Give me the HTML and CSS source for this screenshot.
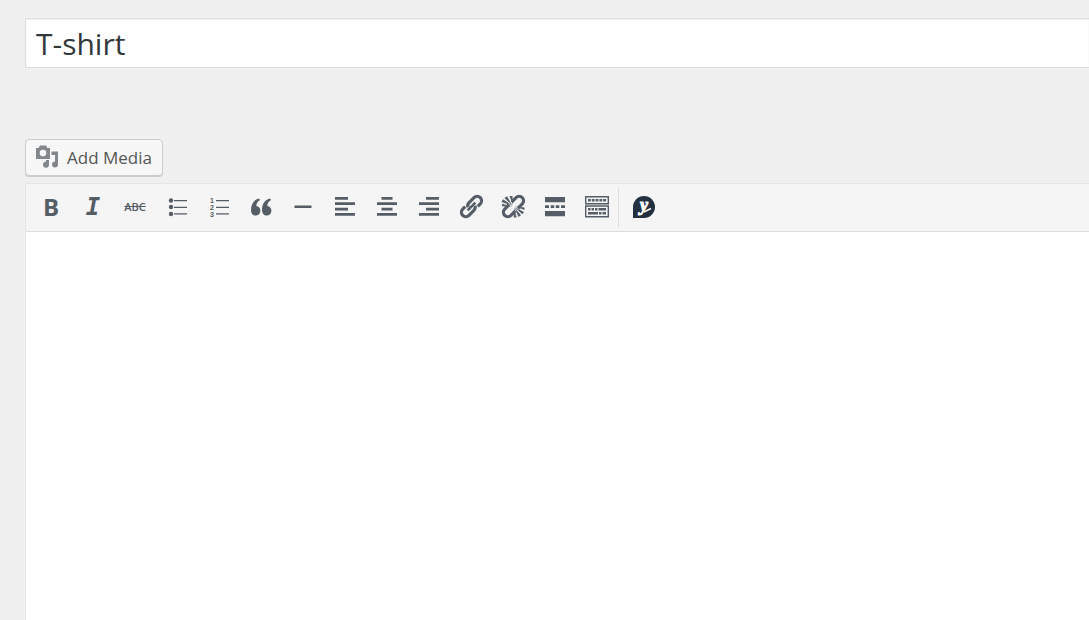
FILE: index.html
```html
<!DOCTYPE html>
<html lang="en">
<head>
    <meta charset="UTF-8">
    <meta name="viewport" content="width=device-width, initial-scale=1.0">
    <title>Edit Product</title>
    <link rel="stylesheet" href="styles.css">
</head>
<body>
<main class="post-body">
    <input class="title" type="text" value="T-shirt" aria-label="Product name">

    <button class="add-media" type="button">
        <svg width="24" height="24" viewBox="0 0 24 24" aria-hidden="true">
            <path fill-rule="evenodd" d="M0 3h2.500L4 .500h6L11.500 3H14v11H0zM7 4.800a3.300 3.300 0 1 0 0 6.600a3.300 3.300 0 1 0 0-6.600z"/>
            <path d="M15.500 6.500H22v13a3 3 0 1 1-3-3V10h-3.500z"/>
            <path d="M10 15h3v4.500a3 3 0 1 1-3-2.800z"/>
        </svg>
        Add Media
    </button>

    <section class="editor">
        <div class="toolbar" role="toolbar" aria-label="Formatting">
            <button type="button" class="tool bold" title="Bold">B</button>
            <button type="button" class="tool italic" title="Italic">I</button>
            <button type="button" class="tool strike" title="Strikethrough">ABC</button>
            <button type="button" class="tool" title="Bulleted list">
                <svg viewBox="0 0 26 26">
                    <circle cx="7" cy="6.500" r="2.200"/><circle cx="7" cy="13" r="2.200"/><circle cx="7" cy="20" r="2.200"/>
                    <path d="M10 6h13v1.300H10zM10 12.700h13V14H10zM10 19.300h13v1.300H10z"/>
                </svg>
            </button>
            <button type="button" class="tool" title="Numbered list">
                <svg viewBox="0 0 26 26">
                    <text class="digit" x="4" y="9">1</text>
                    <text class="digit" x="4" y="16">2</text>
                    <text class="digit" x="4" y="23">3</text>
                    <path d="M10 6h13v1.300H10zM10 12.700h13V14H10zM10 19.300h13v1.300H10z"/>
                </svg>
            </button>
            <button type="button" class="tool" title="Blockquote">
                <svg viewBox="0 0 26 26">
                    <path d="M11 4.500C6 5.500 3 10 3 16c0 3.500 2 5.500 4.700 5.500s4.700-2 4.700-4.800c0-2.500-1.800-4.400-4.100-4.600C8.300 9.500 9.500 7.300 12 6z"/>
                    <path d="M22 4.500c-5 1-8 5.500-8 11.500 0 3.500 2 5.500 4.700 5.500s4.700-2 4.700-4.800c0-2.500-1.800-4.400-4.100-4.600 0-2.600 1.200-4.800 3.700-6.100z"/>
                </svg>
            </button>
            <button type="button" class="tool" title="Horizontal line">
                <svg viewBox="0 0 26 26"><path d="M4.500 11.500h17V14h-17z"/></svg>
            </button>
            <button type="button" class="tool" title="Align left">
                <svg viewBox="0 0 26 26"><path d="M3 3h13v2.700H3zM3 8.300h20V11H3zM3 13.700h13v2.700H3zM3 19h20v2.700H3z"/></svg>
            </button>
            <button type="button" class="tool" title="Align center">
                <svg viewBox="0 0 26 26"><path d="M7.500 3h11v2.700h-11zM3 8.300h20V11H3zM7.500 13.700h11v2.700h-11zM3 19h20v2.700H3z"/></svg>
            </button>
            <button type="button" class="tool" title="Align right">
                <svg viewBox="0 0 26 26"><path d="M10 3h13v2.700H10zM3 8.300h20V11H3zM10 13.700h13v2.700H10zM3 19h20v2.700H3z"/></svg>
            </button>
            <button type="button" class="tool" title="Insert link">
                <svg viewBox="0 0 26 26">
                    <g class="chain" transform="rotate(-45 13.500 12.500)">
                        <path d="M10.500 10.500c.8-1.500 2-2.400 4-2.400h7a4.400 4.400 0 0 1 0 8.800H18"/>
                        <path d="M16.500 14.500c-.8 1.500-2 2.400-4 2.400h-7a4.400 4.400 0 0 1 0-8.800H9"/>
                        <path class="link-bar" d="M8 12.500h11"/>
                    </g>
                </svg>
            </button>
            <button type="button" class="tool" title="Remove link">
                <svg viewBox="0 0 26 26">
                    <g class="chain" transform="rotate(-45 13.500 12.500)">
                        <path d="M15 8.100h6.500a4.400 4.400 0 0 1 0 8.800H15"/>
                        <path d="M12 16.900H5.500a4.400 4.400 0 0 1 0-8.800H12"/>
                    </g>
                    <path class="gap" d="M2 1l23 23"/>
                    <path d="M12.500 11.800L1.500 8 3 5.300zM12.500 11.500L4.500 4 7 2.300zM12.800 11L9.500 2h3zM12 12.500L2 12.300V9.800zM14 14l2.700 9.500h-3zM14.300 13.500l6.700 7.700-2.500 1.800zM14.500 13l9.500 5-1.700 2.300zM15 12.500l9.500 1v2.600z"/>
                </svg>
            </button>
            <button type="button" class="tool" title="Insert Read More tag">
                <svg viewBox="0 0 26 26"><path d="M3 3h20v5.300H3zM3 11.300h4V14H3zM8.700 11.300h3.500V14H8.700zM13.800 11.300h3.500V14h-3.500zM19 11.300h4V14h-4zM3 17h20v5.300H3z"/></svg>
            </button>
            <button type="button" class="tool" title="Toolbar Toggle">
                <svg viewBox="0 0 26 26">
                    <path class="frame" d="M1.700 2.700h22.600v7H1.700zM1.700 12h22.600v10.700H1.700z"/>
                    <path d="M4 5h2.800v2.500H4zM7.800 5h2.800v2.500H7.800zM11.600 5h2.800v2.500h-2.800zM15.400 5h2.800v2.500h-2.800zM19.200 5H22v2.500h-2.800zM4 14h2.500v2.500H4zM7.500 14H10v2.500H7.500zM11 14h2.500v2.500H11zM14.500 14H22v2.500h-7.500zM4 18h10v2.500H4zM15 18h2.500v2.500H15zM18.500 18H22v2.500h-3.500z"/>
                </svg>
            </button>
            <div class="tool-group">
                <button type="button" class="tool" title="Yellow Pencil">
                    <svg viewBox="0 0 26 26">
                        <path class="badge" d="M13 2a11 11 0 0 1 0 22H2V13A11 11 0 0 1 13 2z"/>
                        <text class="badge-letter" x="9" y="17">y</text>
                        <path class="badge-stroke" d="M13 18l7-3.500"/>
                    </svg>
                </button>
            </div>
        </div>
        <textarea class="content" aria-label="Product description"></textarea>
    </section>
</main>
</body>
</html>
```
FILE: styles.css
```css
* {
    box-sizing: border-box;
}

body {
    margin: 0;
    background: #f0f0f0;
    font-family: "Open Sans", sans-serif;
    overflow: hidden;
}

.post-body {
    display: flex;
    flex-direction: column;
    height: 100vh;
    padding: 18px 0 0 25px;
}

.title {
    width: 100%;
    height: 50px;
    margin: 0 0 71px;
    padding: 0 10px;
    border: 1px solid #ddd;
    border-right: 0;
    background: #fff;
    box-shadow: inset 0 1px 2px rgba(0, 0, 0, 0.07);
    color: #32373c;
    font: 30px "Open Sans", sans-serif;
    outline: none;
}

.add-media {
    display: flex;
    align-items: center;
    align-self: flex-start;
    gap: 7px;
    height: 37px;
    margin: 0 0 7px;
    padding: 0 10px 1px;
    border: 1px solid #ccc;
    border-radius: 4px;
    background: #f7f7f7;
    box-shadow: 0 1px 0 #ccc;
    color: #555;
    font: 17px "Open Sans", sans-serif;
}

.add-media svg {
    fill: #82878c;
}

.editor {
    display: flex;
    flex: 1;
    flex-direction: column;
    border: 1px solid #e5e5e5;
    border-width: 1px 0 0 1px;
}

.toolbar {
    display: flex;
    padding: 4px;
    border-bottom: 1px solid #ddd;
    background: #f5f5f5;
}

.tool {
    display: flex;
    align-items: center;
    justify-content: center;
    width: 42px;
    height: 39px;
    padding: 0 0 2px;
    border: 0;
    background: none;
    color: #555d66;
}

.tool svg {
    width: 26px;
    height: 26px;
    fill: #555d66;
}

.bold {
    font: bold 24px "Open Sans", sans-serif;
}

.italic {
    font: italic bold 24px "DejaVu Sans Mono", monospace;
}

.strike {
    font: 600 11px "Open Sans", sans-serif;
    text-decoration: line-through;
}

.digit {
    font: bold 7px/1 "Liberation Sans", sans-serif;
}

.chain {
    fill: none;
    stroke: #555d66;
    stroke-width: 3.2;
}

.link-bar {
    stroke-width: 2.6;
}

.gap {
    stroke: #f5f5f5;
    stroke-width: 4;
}

.frame {
    fill: none;
    stroke: #555d66;
    stroke-width: 1.4;
}

.tool-group {
    padding-left: 4px;
    border-left: 1px solid #ddd;
}

.tool .badge {
    fill: #23303f;
}

.badge-letter {
    fill: #fff;
    stroke: #fff;
    stroke-width: 1;
    font: italic bold 18px "Liberation Serif", serif;
}

.badge-stroke {
    stroke: #fff;
    stroke-width: 1.5;
}

.content {
    flex: 1;
    width: 100%;
    padding: 10px;
    border: 0;
    background: #fff;
    font: 16px "Open Sans", sans-serif;
    outline: none;
    resize: none;
}
```
